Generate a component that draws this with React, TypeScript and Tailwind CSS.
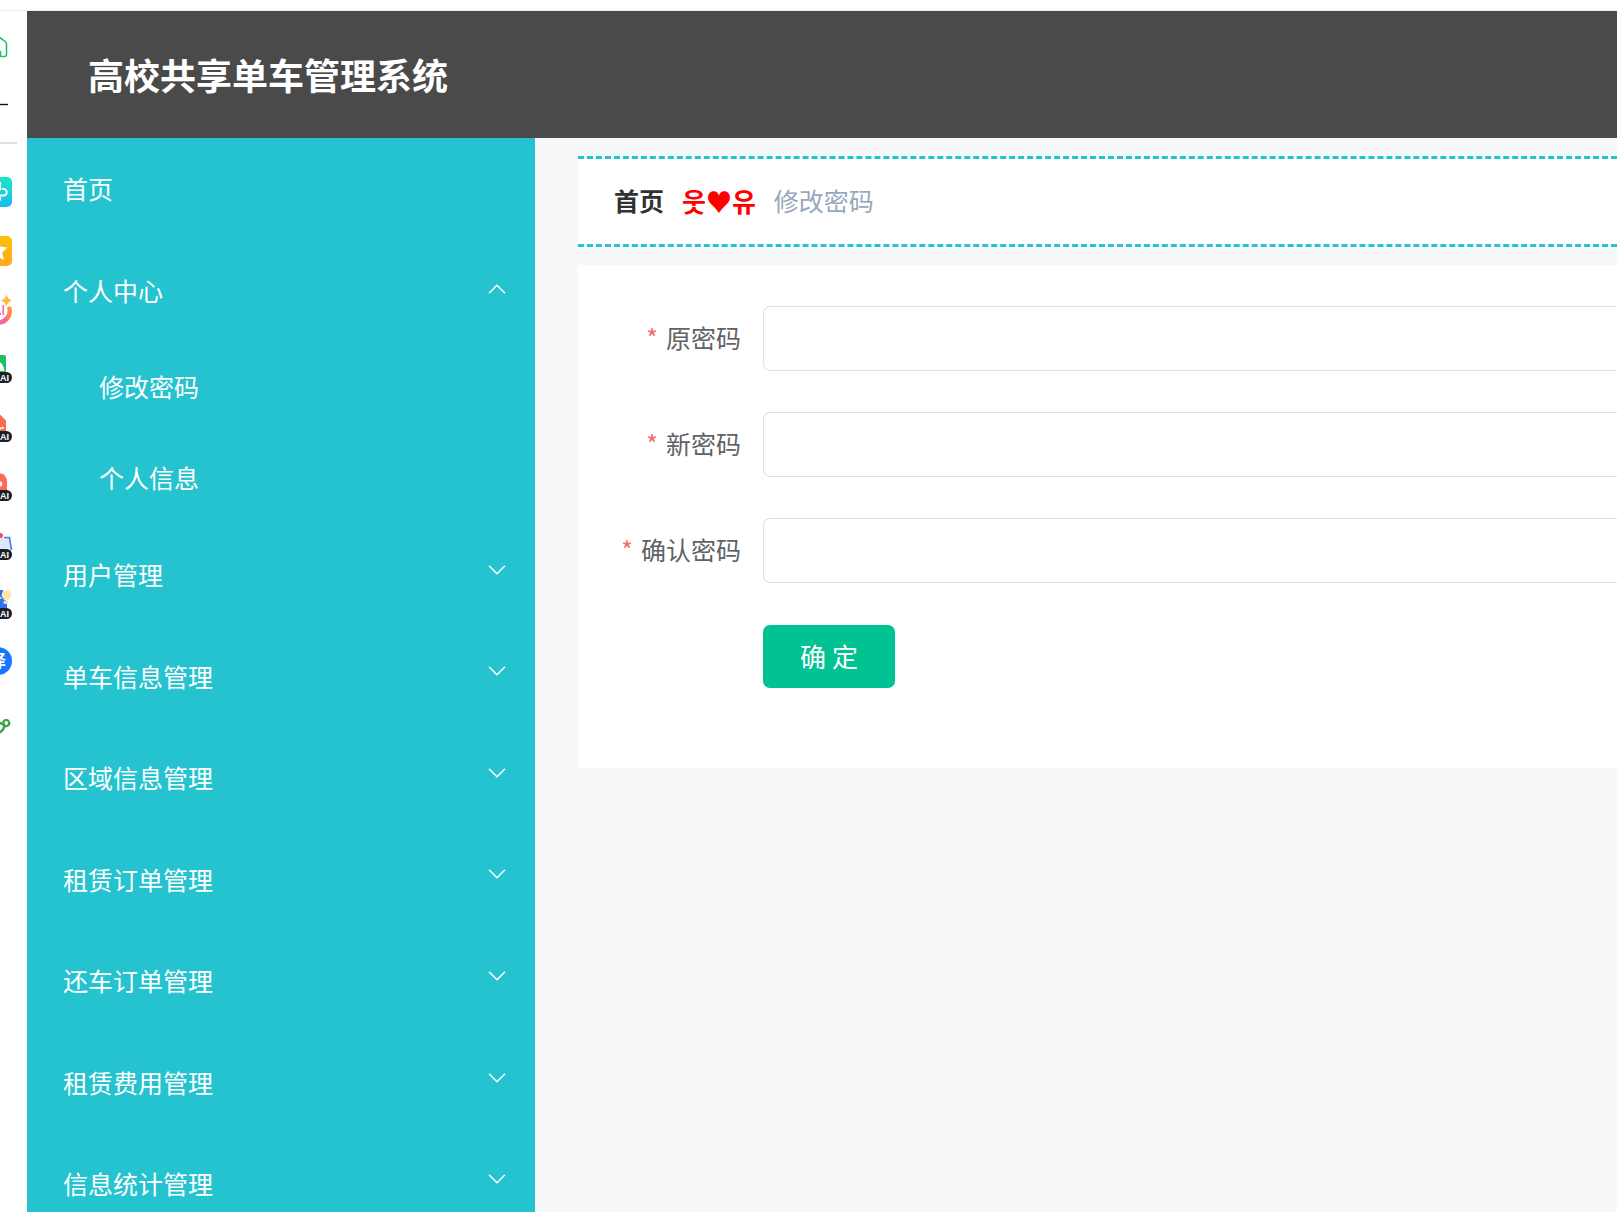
import { FormEvent, ReactNode, useState } from "react";

type PasswordField = "password" | "newPassword" | "confirmPassword";

const fields: { name: PasswordField; label: string }[] = [
  { name: "password", label: "原密码" },
  { name: "newPassword", label: "新密码" },
  { name: "confirmPassword", label: "确认密码" },
];

const menus = [
  "用户管理",
  "单车信息管理",
  "区域信息管理",
  "租赁订单管理",
  "还车订单管理",
  "租赁费用管理",
  "信息统计管理",
];

const Chevron = ({ up = false }: { up?: boolean }) => (
  <svg
    width="18"
    height="10"
    viewBox="0 0 18 10"
    className={up ? "mb-1" : "mb-[10px]"}
    fill="none"
  >
    <path
      d={up ? "M1.500 8.700 9 1.300l7.500 7.400" : "M1.500 1.300 9 8.700l7.500-7.400"}
      stroke="white"
      strokeWidth="1.6"
      strokeLinecap="round"
      strokeLinejoin="round"
    />
  </svg>
);

const RailIcon = ({ children }: { children: ReactNode }) => (
  <svg width="14" height="59" viewBox="0 0 14 59" fill="none" aria-hidden="true">
    {children}
  </svg>
);

const AiBadge = () => (
  <>
    <rect x="-6" y="32" width="18" height="11" rx="5.5" fill="#1c1f26" />
    <text
      x="0"
      y="41"
      fill="white"
      fontSize="9"
      fontWeight="bold"
      fontFamily="Liberation Sans, sans-serif"
    >
      AI
    </text>
  </>
);

const Rail = () => (
  <div className="w-[27px] shrink-0 overflow-hidden bg-white">
    <svg width="27" height="152" viewBox="0 0 27 152" fill="none" aria-hidden="true">
      <path
        d="M.5 40v4.500q0 1 1 1h3q2 0 2-2V33q0-1.500-1.200-2.500L-1 26"
        stroke="#16bd62"
        strokeWidth="1.5"
      />
      <path d="M0 93.500h8" stroke="#111111" strokeWidth="1.4" />
      <path d="M0 132h17" stroke="#e2e2e4" strokeWidth="2" />
    </svg>
    <div className="flex flex-col">
      <RailIcon>
        <defs>
          <linearGradient id="clover" x1="0" y1="0" x2="0.2" y2="1">
            <stop stopColor="#15f0bd" />
            <stop offset="1" stopColor="#20bdeb" />
          </linearGradient>
        </defs>
        <rect x="-18" y="14" width="30" height="30" rx="5" fill="url(#clover)" />
        <path
          d="M.3 20v6.500M2.800 26h.8a3.200 3.200 0 0 1 0 6.500H-1M0 34.500V37"
          stroke="white"
          strokeWidth="1.8"
          strokeLinecap="round"
        />
      </RailIcon>
      <RailIcon>
        <defs>
          <linearGradient id="favorite" x1="0" y1="0" x2="0.2" y2="1">
            <stop stopColor="#ffc400" />
            <stop offset="1" stopColor="#ffab1c" />
          </linearGradient>
        </defs>
        <rect x="-18" y="14" width="30" height="30" rx="5" fill="url(#favorite)" />
        <path d="M-3 17 0 24.500l7.500 1L2 30.500 4 38l-7-4z" fill="white" />
      </RailIcon>
      <RailIcon>
        <defs>
          <linearGradient id="ring" x1="1" y1="0" x2="0" y2="1">
            <stop stopColor="#ff9a3c" />
            <stop offset="0.6" stopColor="#ff6a70" />
            <stop offset="1" stopColor="#d86be0" />
          </linearGradient>
        </defs>
        <path
          d="M9.500 27.500A11.500 11.500 0 0 1-2 41.500"
          stroke="url(#ring)"
          strokeWidth="4.500"
          strokeLinecap="round"
        />
        <path
          d="M6.500 13.500q1.200 4.800 5.800 6-4.600 1.200-5.800 6-1.200-4.800-5.800-6 4.600-1.200 5.800-6z"
          fill="#fdb83f"
        />
        <text x="-8" y="34" fill="#f0529c" fontSize="14" fontFamily="Liberation Sans, sans-serif">
          AI
        </text>
      </RailIcon>
      <RailIcon>
        <path d="M-10 15H4q2 0 2 2v17h-16z" fill="#22bd5d" />
        <path d="M-2 21q5 1.500 6.500 10H-2z" fill="white" />
        <AiBadge />
      </RailIcon>
      <RailIcon>
        <path d="M-10 15h9.500L6 21.500V34h-16z" fill="#fb6c50" />
        <path d="M-1 30.500q3-2.500 5-1.500" stroke="white" strokeWidth="1.5" />
        <AiBadge />
      </RailIcon>
      <RailIcon>
        <path d="M-6 15q13-1 13 9v10H-6z" fill="#fb6a5c" />
        <circle cx="-0.500" cy="26" r="2.800" fill="white" />
        <AiBadge />
      </RailIcon>
      <RailIcon>
        <path d="M-3 21 8.500 20l2.500 14H-1z" fill="#dce7fb" />
        <path d="M4 20.500h5.500L11.500 33" stroke="#3f7df2" strokeWidth="1.6" />
        <circle cx="0.500" cy="18.500" r="2.500" fill="#ef4d76" />
        <AiBadge />
      </RailIcon>
      <RailIcon>
        <path d="M-10 14H3v5l4 8v7h-17z" fill="#2f74ee" />
        <path d="M0 22h1.500" stroke="white" strokeWidth="1.5" />
        <path
          d="M6.500 14a4.800 4.800 0 0 0-3 8.500l.5 2h5l.5-2a4.800 4.800 0 0 0-3-8.500z"
          fill="#ffe6ae"
        />
        <rect x="3.500" y="25" width="4.500" height="3" rx="1" fill="#e8dcc2" />
        <AiBadge />
      </RailIcon>
      <RailIcon>
        <circle cx="-2" cy="26" r="14" fill="#1677ff" />
        <text
          x="-11"
          y="32"
          fill="white"
          fontSize="17"
          fontWeight="bold"
          fontFamily="Noto Sans CJK SC, sans-serif"
        >
          译
        </text>
      </RailIcon>
      <RailIcon>
        <ellipse
          cx="6.300"
          cy="29"
          rx="2.800"
          ry="3"
          transform="rotate(-25 6.300 29)"
          stroke="#3fa048"
          strokeWidth="2.200"
        />
        <path d="M4.500 32Q2.500 29-1 29M4.500 32.500Q3 37-2 39.500" stroke="#3fa048" strokeWidth="2.500" />
      </RailIcon>
    </div>
  </div>
);

const Sidebar = () => {
  const [open, setOpen] = useState(true);

  return (
    <nav className="w-[508px] shrink-0 overflow-hidden bg-[#25c3cf] text-[25px] text-white">
      <a href="#home" className="flex h-[102px] items-center px-9">
        首页
      </a>
      <button
        type="button"
        onClick={() => setOpen(!open)}
        className="flex h-[102px] w-full items-center justify-between pr-[29px] pl-9"
      >
        个人中心
        <Chevron up={open} />
      </button>
      {open && (
        <div className="flex flex-col">
          <a href="#password" className="flex h-[91px] items-center px-[72px] pb-0.5">
            修改密码
          </a>
          <a href="#profile" className="flex h-[91px] items-center px-[72px] pb-0.5">
            个人信息
          </a>
        </div>
      )}
      <div className="grid h-[711px] auto-rows-fr">
        {menus.map((menu) => (
          <button
            key={menu}
            type="button"
            className="flex items-center justify-between pr-[29px] pl-9"
          >
            {menu}
            <Chevron />
          </button>
        ))}
      </div>
    </nav>
  );
};

const PasswordForm = () => {
  const [form, setForm] = useState<Record<PasswordField, string>>({
    password: "",
    newPassword: "",
    confirmPassword: "",
  });

  const handleSubmit = (e: FormEvent) => {
    e.preventDefault();
  };

  return (
    <form onSubmit={handleSubmit} className="mt-[18px] bg-white pt-[41px] pb-20 pl-5 text-[25px]">
      <div className="flex flex-col gap-[41px]">
        {fields.map(({ name, label }) => (
          <div key={name} className="flex items-center">
            <label
              htmlFor={name}
              className="w-[165px] shrink-0 pr-[22px] pb-0.5 text-right text-[#606266]"
            >
              <span className="mr-2 text-[#f56c6c]">*</span>
              {label}
            </label>
            <input
              id={name}
              type="password"
              value={form[name]}
              onChange={(e) => setForm({ ...form, [name]: e.target.value })}
              className="h-[65px] min-w-0 flex-1 rounded-l-[7px] border border-r-0 border-[#dcdfe6] bg-white px-7 outline-none"
            />
          </div>
        ))}
      </div>
      <button
        type="submit"
        className="mt-[42px] ml-[165px] block h-[63px] w-[132px] rounded-[7px] bg-[#00c292] pb-0.5 text-[26px] text-white"
      >
        确 定
      </button>
    </form>
  );
};

const App = () => {
  return (
    <div className="flex h-screen flex-col overflow-hidden bg-white font-['Noto_Sans_CJK_SC','Noto_Sans_CJK_KR',sans-serif]">
      <div className="h-[11px] shrink-0 border-b border-[#ececee]" />
      <div className="flex min-h-0 flex-1">
        <Rail />
        <div className="flex min-w-0 flex-1 flex-col">
          <header className="flex h-[127px] shrink-0 items-center bg-[#4a4a4a] px-[61px] pb-0.5">
            <h1 className="text-4xl font-bold text-white">高校共享单车管理系统</h1>
          </header>
          <div className="flex min-h-0 flex-1">
            <Sidebar />
            <main className="min-w-0 flex-1 bg-[#f7f8fa] pt-[18px] pl-[43px]">
              <div className="flex h-[91px] items-center gap-[18px] border-y-[3px] border-dashed border-[#25c3cf] bg-white px-9 pb-0.5 text-[25px]">
                <a href="#home" className="font-bold text-[#303133]">
                  首页
                </a>
                <span className="text-[26px] font-bold text-[#ff0000]">웃♥유</span>
                <span className="text-[#97a8be]">修改密码</span>
              </div>
              <PasswordForm />
            </main>
          </div>
        </div>
      </div>
    </div>
  );
};

export default App;
